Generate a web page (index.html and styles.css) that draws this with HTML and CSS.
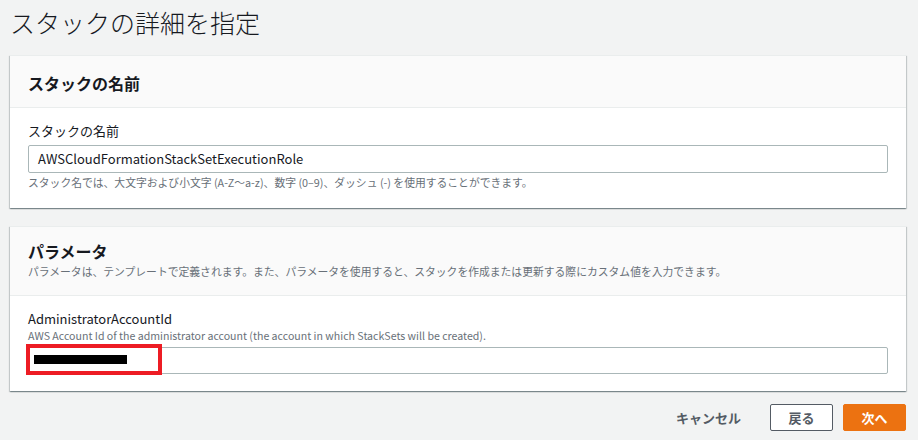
FILE: index.html
```html
<!DOCTYPE html>
<html lang="ja">
<head>
<meta charset="utf-8">
<link rel="stylesheet" href="styles.css">
</head>
<body>
<div class="page">
  <h1 class="title">スタックの詳細を指定</h1>

  <section class="card">
    <div class="card-header">
      <h2 class="card-title">スタックの名前</h2>
    </div>
    <div class="card-body">
      <label class="field-label">スタックの名前</label>
      <div class="input">AWSCloudFormationStackSetExecutionRole</div>
      <div class="hint">スタック名では、大文字および小文字 (A-Z～a-z)、数字 (0–9)、ダッシュ (-) を使用することができます。</div>
    </div>
  </section>

  <section class="card card-second">
    <div class="card-header">
      <h2 class="card-title">パラメータ</h2>
      <div class="card-desc">パラメータは、テンプレートで定義されます。また、パラメータを使用すると、スタックを作成または更新する際にカスタム値を入力できます。</div>
    </div>
    <div class="card-body body-second">
      <label class="field-label">AdministratorAccountId</label>
      <div class="field-desc">AWS Account Id of the administrator account (the account in which StackSets will be created).</div>
      <div class="input input-masked">
        <span class="mask"></span>
        <span class="highlight"></span>
      </div>
    </div>
  </section>

  <div class="actions">
    <button class="btn btn-link">キャンセル</button>
    <button class="btn btn-normal">戻る</button>
    <button class="btn btn-primary">次へ</button>
  </div>
</div>
</body>
</html>
```

FILE: styles.css
```css
* { box-sizing: border-box; }
html, body { margin: 0; padding: 0; }
body {
  background: #f2f3f3;
  font-family: "Noto Sans CJK JP", "Noto Sans", sans-serif;
  color: #16191f;
  width: 918px;
  height: 440px;
  overflow: hidden;
}
.page { padding: 0 12px 0 10px; }
.title {
  margin: 0;
  padding-top: 4px;
  height: 55px;
  font-size: 25px;
  line-height: 36px;
  font-weight: 300;
  color: #16191f;
}
.card {
  background: #fff;
  border-top: 1px solid #eaeded;
  box-shadow: 0 1px 1px 0 rgba(0,28,36,.3), 1px 1px 1px 0 rgba(0,28,36,.15), -1px 1px 1px 0 rgba(0,28,36,.15);
}
.card-second { margin-top: 18px; }
.card-header {
  background: #fafafa;
  border-bottom: 1px solid #eaeded;
  padding: 16px 18px 13px;
}
.card-second .card-header { padding: 13px 18px 16px; }
.card-title {
  margin: 0;
  font-size: 16px;
  line-height: 22px;
  font-weight: 700;
}
.card-desc {
  font-size: 10.8px;
  line-height: 16px;
  color: #687078;
  margin-top: 1px;
}
.card-body { padding: 14px 18px 18px; }
.body-second { padding-bottom: 17px; }
.field-label {
  display: block;
  font-size: 13px;
  line-height: 18px;
  color: #16191f;
}
.input {
  margin-top: 5px;
  height: 28px;
  border: 1px solid #aab7b8;
  border-radius: 2px;
  background: #fff;
  padding: 0 9px;
  font-size: 13px;
  line-height: 26px;
  color: #16191f;
}
.hint {
  margin-top: 1px;
  font-size: 10.8px;
  line-height: 16px;
  color: #687078;
}
.field-desc {
  font-size: 10.6px;
  line-height: 14px;
  color: #687078;
  margin-top: 1px;
}
.input-masked { position: relative; margin-top: 4px; height: 27px; }
.mask {
  position: absolute;
  left: 5px;
  top: 7px;
  width: 93px;
  height: 9px;
  background: #000;
}
.highlight {
  position: absolute;
  left: -3px;
  top: -4px;
  width: 136px;
  height: 31px;
  border: 4px solid #ed1c24;
}
.actions {
  display: flex;
  justify-content: flex-end;
  align-items: center;
  margin-top: 13px;
}
.btn {
  font-family: inherit;
  font-size: 13px;
  font-weight: 700;
  height: 27px;
  line-height: 25px;
  padding: 0 17px;
  border-radius: 2px;
  cursor: pointer;
}
.btn-link {
  background: transparent;
  border: 1px solid transparent;
  color: #545b64;
  margin-right: 11px;
}
.btn-normal {
  background: #fff;
  border: 1px solid #545b64;
  color: #545b64;
  width: 63px;
  padding: 0;
  margin-right: 10px;
}
.btn-primary {
  background: #ec7211;
  border: 1px solid #ec7211;
  color: #fff;
  width: 63px;
  padding: 0;
}
```
